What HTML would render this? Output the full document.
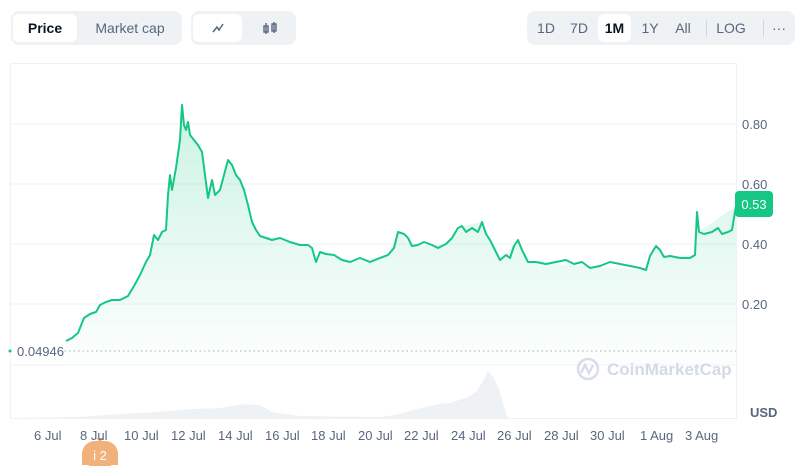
<!DOCTYPE html>
<html><head><meta charset="utf-8"><style>
body{margin:0;width:795px;height:466px;background:#fff;font-family:"Liberation Sans",sans-serif;overflow:hidden;position:relative}
.grp{position:absolute;top:11px;height:34px;background:#eff2f5;border-radius:8px}
.btn{position:absolute;top:3px;height:28px;line-height:28px;font-size:14px;color:#58667e;text-align:center;border-radius:6px}
.on{background:#fff;color:#0d1421;font-weight:bold}
.ax{position:absolute;font-size:13px;color:#58667e}
</style></head><body>
<div class="grp" style="left:11px;width:171px">
 <div class="btn on" style="left:2px;width:64px">Price</div>
 <div class="btn" style="left:70px;width:98px">Market cap</div>
</div>
<div class="grp" style="left:191px;width:105px">
 <div class="btn on" style="left:2px;width:49px"><svg width="14" height="14" viewBox="0 0 14 14" style="vertical-align:-2px"><path d="M2 11 L6 6 L8 9 L12 3" fill="none" stroke="#58667e" stroke-width="1.5"/></svg></div>
 <div class="btn" style="left:55px;width:48px"><svg width="16" height="16" viewBox="0 0 16 16" style="vertical-align:-3px"><g fill="none" stroke="#58667e" stroke-width="1.4"><rect x="2" y="6" width="4" height="6"/><line x1="4" y1="3" x2="4" y2="14"/><rect x="10" y="4" width="4" height="7"/><line x1="12" y1="2" x2="12" y2="13"/></g></svg></div>
</div>
<div class="grp" style="left:527px;width:268px">
 <div class="btn" style="left:4px;width:30px">1D</div>
 <div class="btn" style="left:37px;width:30px">7D</div>
 <div class="btn on" style="left:71px;width:33px">1M</div>
 <div class="btn" style="left:108px;width:30px">1Y</div>
 <div class="btn" style="left:141px;width:30px">All</div>
 <div style="position:absolute;left:179px;top:9px;width:1px;height:17px;background:#cfd6e4"></div>
 <div class="btn" style="left:184px;width:40px">LOG</div>
 <div style="position:absolute;left:236px;top:9px;width:1px;height:17px;background:#cfd6e4"></div>
 <div class="btn" style="left:240px;width:24px">···</div>
</div>
<svg width="795" height="466" style="position:absolute;left:0;top:0">
<defs><linearGradient id="g" x1="0" y1="0" x2="0" y2="1"><stop offset="0" stop-color="#16c784" stop-opacity="0.22"/><stop offset="1" stop-color="#16c784" stop-opacity="0.01"/></linearGradient></defs>
<rect x="10.5" y="63.5" width="726" height="355" fill="none" stroke="#eff2f5"/>
<g stroke="#eff2f5"><line x1="10" y1="124" x2="736" y2="124"/><line x1="10" y1="184" x2="736" y2="184"/><line x1="10" y1="244" x2="736" y2="244"/><line x1="10" y1="304" x2="736" y2="304"/><line x1="10" y1="365" x2="736" y2="365"/></g>
<path d="M10 418 L80 417 L120 414 L160 412 L190 409 L220 408 L245 404 L260 405 L272 412 L300 416 L380 417 L400 414 L420 408 L440 404 L450 403 L468 397 L476 392 L482 383 L488 371 L494 378 L500 392 L505 410 L508 418 Z" fill="#eff2f5"/>
<line x1="60" y1="351" x2="736" y2="351" stroke="#a6b0c3" stroke-dasharray="1.5,3"/>
<path id="p" d="M66 341 L72 338 L78 333 L84 318 L90 314 L96 312 L100 305 L106 302 L112 300 L120 300 L128 296 L134 286 L140 275 L146 262 L150 255 L154 235 L158 240 L162 232 L166 230 L168 195 L170 175 L172 190 L176 168 L180 140 L182 105 L184 125 L186 130 L188 122 L190 135 L194 140 L198 145 L202 152 L205 175 L208 198 L212 180 L215 195 L220 190 L224 175 L228 160 L232 165 L236 175 L240 180 L244 190 L248 205 L252 222 L256 230 L260 236 L266 238 L272 240 L280 238 L290 242 L300 245 L308 245 L312 248 L316 262 L320 252 L326 254 L334 255 L342 260 L350 262 L360 258 L370 262 L380 258 L388 255 L394 248 L398 232 L404 234 L408 238 L412 246 L418 245 L424 242 L432 245 L438 248 L446 244 L452 238 L458 228 L462 226 L466 232 L472 228 L478 232 L482 222 L486 234 L490 240 L494 248 L500 260 L506 255 L510 258 L514 246 L518 240 L522 250 L528 262 L536 262 L546 264 L556 262 L566 260 L574 264 L582 262 L590 268 L600 266 L610 262 L620 264 L630 266 L640 268 L646 270 L650 256 L656 246 L660 250 L664 257 L670 256 L680 258 L690 258 L695 255 L697 212 L699 232 L704 234 L712 232 L718 228 L722 234 L728 232 L732 230 L736 206" fill="none" stroke="#16c784" stroke-width="2" stroke-linejoin="round"/>
<path d="M66 341 L72 338 L78 333 L84 318 L90 314 L96 312 L100 305 L106 302 L112 300 L120 300 L128 296 L134 286 L140 275 L146 262 L150 255 L154 235 L158 240 L162 232 L166 230 L168 195 L170 175 L172 190 L176 168 L180 140 L182 105 L184 125 L186 130 L188 122 L190 135 L194 140 L198 145 L202 152 L205 175 L208 198 L212 180 L215 195 L220 190 L224 175 L228 160 L232 165 L236 175 L240 180 L244 190 L248 205 L252 222 L256 230 L260 236 L280 238 L300 245 L312 248 L316 262 L320 252 L350 262 L388 255 L398 232 L412 246 L446 244 L462 226 L482 222 L500 260 L518 240 L528 262 L646 270 L656 246 L664 257 L695 255 L697 212 L699 232 L736 206 L736 365 L66 365 Z" fill="url(#g)"/>
<g fill="none" stroke="#cfd6e4" stroke-width="2.5" opacity="0.8"><circle cx="588" cy="369" r="10"/><path d="M581 373 L585 365 L589 373 L593 365"/></g>
<text x="607" y="375" font-size="17" font-family="Liberation Sans" font-weight="bold" fill="#cfd6e4" opacity="0.9">CoinMarketCap</text>
<rect x="735" y="191" width="38" height="26" rx="4" fill="#16c784"/>
<text x="754" y="209" font-size="13" fill="#fff" text-anchor="middle" font-family="Liberation Sans">0.53</text>
<circle cx="10" cy="351" r="1.5" fill="#16c784"/>
<rect x="14" y="343" width="50" height="16" fill="#fff"/>
<text x="17" y="356" font-size="13" fill="#58667e" font-family="Liberation Sans">0.04946</text>
<path d="M100 442 L96 438 L104 438 Z M82 455 a18 13 0 0 1 36 0 v10 h-36 Z" fill="#f0b27a"/>
<rect x="82" y="441" width="36" height="26" rx="13" fill="#f0b27a"/>
<text x="100" y="460" font-size="13" fill="#fff" text-anchor="middle" font-family="Liberation Sans">i  2</text>
</svg>
<div class="ax" style="left:742px;top:117px">0.80</div>
<div class="ax" style="left:742px;top:177px">0.60</div>
<div class="ax" style="left:742px;top:237px">0.40</div>
<div class="ax" style="left:742px;top:297px">0.20</div>
<div class="ax" style="left:750px;top:405px;font-weight:bold">USD</div>
<div class="ax" style="left:34px;top:428px">6 Jul</div>
<div class="ax" style="left:80px;top:428px">8 Jul</div>
<div class="ax" style="left:124px;top:428px">10 Jul</div>
<div class="ax" style="left:171px;top:428px">12 Jul</div>
<div class="ax" style="left:218px;top:428px">14 Jul</div>
<div class="ax" style="left:265px;top:428px">16 Jul</div>
<div class="ax" style="left:311px;top:428px">18 Jul</div>
<div class="ax" style="left:358px;top:428px">20 Jul</div>
<div class="ax" style="left:404px;top:428px">22 Jul</div>
<div class="ax" style="left:451px;top:428px">24 Jul</div>
<div class="ax" style="left:497px;top:428px">26 Jul</div>
<div class="ax" style="left:544px;top:428px">28 Jul</div>
<div class="ax" style="left:590px;top:428px">30 Jul</div>
<div class="ax" style="left:640px;top:428px">1 Aug</div>
<div class="ax" style="left:685px;top:428px">3 Aug</div>
</body></html>
